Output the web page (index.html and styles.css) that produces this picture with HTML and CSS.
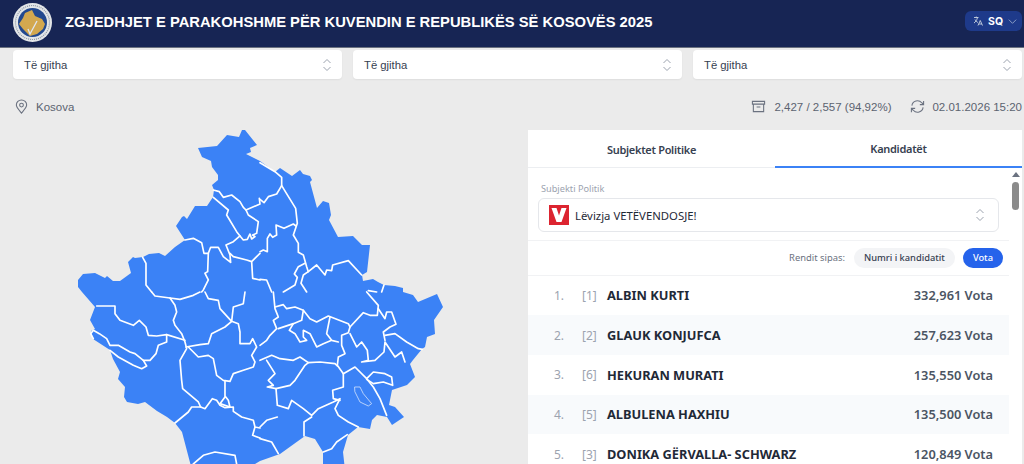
FILE: index.html
```html
<!DOCTYPE html>
<html>
<head>
    <title>Zgjedhjet e Parakohshme</title>
    <meta http-equiv="Content-Type" content="text/html; charset=utf-8" />
    <link rel="stylesheet" href="styles.css">
</head>
<body>
<div class="page">
    <div class="header">
        <svg class="logo" viewBox="0 0 39 39">
            <circle cx="19.500" cy="19.500" r="19.500" fill="#e3e6e8"/>
            <circle cx="19.500" cy="19.500" r="17" fill="none" stroke="#8d96a3" stroke-width="1.200" stroke-dasharray="1 1"/>
            <circle cx="19.500" cy="19.500" r="14.500" fill="#23498f"/>
            <path d="M12 10L19 7 22 13 29 16 32 21 30 26 24 31 17 33 10 26 6 21 10 15z" fill="#d3a84f"/>
            <path d="M15 26L17 31 24 18" fill="none" stroke="#dfe6f2" stroke-width="1.300"/>
        </svg>
        <div class="title">ZGJEDHJET E PARAKOHSHME PËR KUVENDIN E REPUBLIKËS SË KOSOVËS 2025</div>
        <div class="lang">
            <svg class="lang-icon" viewBox="0 0 24 24"><path d="M4 5h9M8.500 3v2M11 5c-1 5-4 9-7 11M6 9c1 3 4 5 6 6M12 21l4.500-10 4.500 10M13.500 18h6"/></svg>
            <span>SQ</span>
            <svg class="lang-caret" viewBox="0 0 12 12"><path d="M2 4l4 4 4-4"/></svg>
        </div>
    </div>

    <div class="filters">
        <div class="select"><span>Të gjitha</span><svg class="updown" viewBox="0 0 12 16"><path d="M2.500 6L6 2.500 9.500 6M2.500 10L6 13.500 9.500 10"/></svg></div>
        <div class="select"><span>Të gjitha</span><svg class="updown" viewBox="0 0 12 16"><path d="M2.500 6L6 2.500 9.500 6M2.500 10L6 13.500 9.500 10"/></svg></div>
        <div class="select"><span>Të gjitha</span><svg class="updown" viewBox="0 0 12 16"><path d="M2.500 6L6 2.500 9.500 6M2.500 10L6 13.500 9.500 10"/></svg></div>
    </div>

    <div class="status">
        <div class="place">
            <svg class="status-icon" viewBox="0 0 16 16"><path d="M8 15C5 11.500 2.500 9 2.500 6.500a5.500 5.500 0 0 1 11 0C13.500 9 11 11.500 8 15z"/><circle cx="8" cy="6.500" r="2"/></svg>
            <span>Kosova</span>
        </div>
        <div class="counts">
            <svg class="status-icon" viewBox="0 0 16 16"><path d="M1.500 2.500h13v3h-13zM2.500 5.500v8h11v-8M6 8.500h4"/></svg>
            <span>2,427 / 2,557 (94,92%)</span>
        </div>
        <div class="updated">
            <svg class="status-icon" viewBox="0 0 16 16"><path d="M2 7a6 6 0 0 1 10.500-3L14.500 6M14.500 2v4h-4M14 9a6 6 0 0 1-10.500 3L1.500 10M1.500 14v-4h4"/></svg>
            <span>02.01.2026 15:20</span>
        </div>
    </div>

    <div class="content">
        <div class="map-col">
            <svg class="map" viewBox="0 130 528 334">
                <path class="land" d="M198 148L217 146 227 135 239 137 242 130 245 130 257 145 250 148 251 152 246 154 260 161 275 172 280 168 292 176 300 170 303 174 310 176 312 180 310 182 317 208 323 201 329 203 331 215 329 220 338 237 353 236 362 245 370 245 367 272 362 275 363 281 373 279 378 282 384 285 395 286 403 288 403 292 413 295 418 302 437 294 443 307 434 320 435 334 427 337 425 347 422 349 413 360 410 364 415 377 407 385 392 390 389 405 395 407 404 417 392 425 387 417 377 415 372 420 370 429 358 427 348 435 343 452 345 470 323 470 323 452 315 439 305 436 280 454 277 455 260 461 245 470 192 470 182 432 175 423 167 417 157 411 145 402 138 404 127 402 124 397 125 387 118 379 120 372 113 359 110 350 93 339 91 331 95 329 90 320 95 307 82 292 78 287 78 280 83 274 95 273 105 278 107 276 113 281 120 281 131 273 128 262 133 257 135 258 143 257 149 254 159 253 165 256 175 247 185 240 176 226 182 217 184 216 187 219 195 206 207 206 213 197 214 190 212 185 218 180 218 175 212 167 211 161 202 157z"/>
                <g class="borders" transform="translate(60 120) scale(.3333)">
                    <path d="M460 210L478 215 490 232 515 225 540 245 550 262 558 270 600 252M598 235L600 252"/>
                    <path d="M460 232L505 270 500 285 530 335 540 348 520 365 498 375 510 405 512 427 490 410 475 382 452 382 445 400 432 400 425 368 400 355 375 360"/>
                    <path d="M445 400L443 455 435 460 445 480 430 510 425 516"/>
                    <path d="M248 412L258 430 258 495 275 516"/>
                    <path d="M558 270L565 285 595 305 590 340 578 345 585 350 575 357 570 342 562 358 550 360 540 348"/>
                    <path d="M510 400L520 410 560 420 575 425 600 400M575 425L578 475 600 480"/>
                </g>
                <g class="borders" transform="translate(260 120) scale(.3333)">
                    <path d="M0 128L45 155 65 172 65 197 50 222 25 230 12 248 0 238"/>
                    <path d="M65 197L107 265 112 310 100 345 115 370 115 397 130 405 140 440 145 455 130 465 123 490 140 516"/>
                    <path d="M48 315L72 325 100 312 108 318M48 315L50 345 38 352 30 342 22 355 22 395 10 390 0 395"/>
                    <path d="M135 430L115 440 103 462 112 472 105 495 70 516"/>
                    <path d="M145 455L170 435 195 465 200 450 215 452 218 435 265 422 305 465"/>
                    <path d="M0 478L20 480 35 516M325 512L350 516M372 495L365 516"/>
                </g>
                <g class="borders" transform="translate(60 292) scale(.3333)">
                    <path d="M110 42L165 42 165 65 180 85 220 100 238 85 258 105 265 130 290 132 320 128 375 145"/>
                    <path d="M275 0L285 12 330 18 360 22 400 10 420 0"/>
                    <path d="M330 18L345 40 350 60 340 85 345 100 365 125 375 150 380 170 360 205 365 265 368 290 415 330 422 345 395 345 385 360 345 393"/>
                    <path d="M320 128L320 150 295 160 288 185 270 205 250 205 225 185 210 180 175 160 150 160 140 140 118 125 100 115 92 125 100 140"/>
                    <path d="M150 175L175 195 220 220 245 230 260 222 250 205"/>
                    <path d="M378 165L420 158 445 155 455 125 495 105 515 88 535 95 540 120 540 155 570 155 578 140 590 165 575 190 585 210 580 225 550 235 520 245 510 268 490 265 470 250 460 200 445 190 415 195 385 165"/>
                    <path d="M515 88L520 45 550 35 555 0M435 0L445 20 475 25 480 50 515 88"/>
                    <path d="M495 268L495 315 480 335 510 345 505 325 495 312"/>
                    <path d="M422 345L435 350 457 320 470 325 480 340 495 347 520 345 520 358 545 375 580 385 585 405 600 408M585 405L578 430 600 438"/>
                    <path d="M400 516L430 490 465 480 525 490 530 516"/>
                </g>
                <g class="borders" transform="translate(260 292) scale(.3333)">
                    <path d="M40 0L45 50 55 75 40 85 50 110 30 130 20 145 0 160"/>
                    <path d="M45 45L70 38 80 50 105 45 130 55 125 85 100 95 55 110"/>
                    <path d="M130 55L150 80 170 90 205 72 265 95 270 105"/>
                    <path d="M210 75L200 125 215 145 235 150 215 145 190 155 170 165 150 125 130 115 130 135 140 145 120 150 105 125 88 115 100 95"/>
                    <path d="M320 0L355 40 352 70 330 70 310 62 270 105 265 122 245 130 245 160 255 185 235 195 232 220 250 245 285 225 320 260 340 285 360 320 380 370"/>
                    <path d="M270 125L290 165 305 150 322 175 325 205 305 210 345 205 372 180 375 150 405 195 425 180 435 210"/>
                    <path d="M355 50L375 80 380 60 395 60 408 97 390 105 370 120 375 145"/>
                    <path d="M375 130L405 125 440 150 475 170 487 172"/>
                    <path d="M0 205L35 190 60 200 100 205 120 195 145 212 180 210 225 215 232 222"/>
                    <path d="M20 205L45 245 25 265 40 280 22 285 48 290 90 280 105 265 135 220 145 212"/>
                    <path d="M48 290L52 340 85 350 95 325 130 350 155 370 175 350 220 330 240 320 225 350 235 370 265 390 295 405"/>
                    <path d="M250 245L250 285 218 295 220 320 240 325"/>
                    <path d="M155 375L132 390 132 432M52 375L20 385 0 405M0 440L35 450 55 485"/>
                    <path d="M190 480L215 470 230 450 262 428"/>
                    <path d="M320 260L340 240 375 245 395 255 398 280 370 270 340 275 320 262"/>
                    <path class="lake" d="M285 285L300 285 310 305 335 335 325 342 300 330 285 300z"/>
                </g>
            </svg>
        </div>

        <div class="panel">
            <div class="tabs">
                <div class="tab">Subjektet Politike</div>
                <div class="tab tab-active">Kandidatët</div>
            </div>
            <div class="panel-body">
                <div class="panel-main">
                    <div class="party-block">
                        <div class="party-label">Subjekti Politik</div>
                        <div class="party-select">
                            <svg class="party-logo" viewBox="0 0 20 20">
                                <rect width="20" height="20" fill="#dc2430"/>
                                <path d="M2.500 3h5L10 10.500 12.500 3h5L12.500 17h-5z" fill="#fff"/>
                            </svg>
                            <span class="party-name">Lëvizja VETËVENDOSJE!</span>
                            <svg class="updown" viewBox="0 0 12 16"><path d="M2.500 6L6 2.500 9.500 6M2.500 10L6 13.500 9.500 10"/></svg>
                        </div>
                    </div>
                    <div class="sort-row">
                        <span class="sort-label">Rendit sipas:</span>
                        <span class="pill">Numri i kandidatit</span>
                        <span class="pill pill-active">Vota</span>
                    </div>
                    <div class="row"><span class="num">1.</span><span class="code">[1]</span><span class="name">ALBIN KURTI</span><span class="votes">332,961 Vota</span></div>
                    <div class="row row-alt"><span class="num">2.</span><span class="code">[2]</span><span class="name">GLAUK KONJUFCA</span><span class="votes">257,623 Vota</span></div>
                    <div class="row"><span class="num">3.</span><span class="code">[6]</span><span class="name">HEKURAN MURATI</span><span class="votes">135,550 Vota</span></div>
                    <div class="row row-alt"><span class="num">4.</span><span class="code">[5]</span><span class="name">ALBULENA HAXHIU</span><span class="votes">135,500 Vota</span></div>
                    <div class="row"><span class="num">5.</span><span class="code">[3]</span><span class="name">DONIKA GËRVALLA- SCHWARZ</span><span class="votes">120,849 Vota</span></div>
                </div>
                <div class="scrollbar">
                    <div class="scroll-arrow"></div>
                    <div class="scroll-thumb"></div>
                </div>
            </div>
        </div>
    </div>
</div>
</body>
</html>
```

FILE: styles.css
```css
html, body {margin: 0; height: 100%; overflow: hidden;}
body{
    background: #ebebeb;
    font-family: "Liberation Sans", Arial, sans-serif;
    color: #4b5563;
}
.page{
    height: 464px;
    overflow: hidden;
}

/* Шапка */
.header{
    display: flex;
    align-items: center;
    height: 48px;
    background: #172554;
    border-bottom: 1px solid #6b7280;
    box-sizing: border-box;
    padding: 0 2px 0 13px;
}
.logo{
    width: 39px;
    height: 39px;
    margin-right: 13px;
    margin-top: -2px;
}
.title{
    flex: 1;
    font-size: 14.750px;
    font-weight: bold;
    color: white;
    margin-top: -3px;
}
.lang{
    display: flex;
    align-items: center;
    width: 57px;
    height: 20px;
    box-sizing: border-box;
    padding-left: 7px;
    background: #1e3a8a;
    border-radius: 6px;
    color: white;
    font-size: 10.500px;
    font-weight: bold;
    font-family: "Inter", sans-serif;
    margin-top: -5px;
}
.lang-icon{
    width: 12px;
    height: 12px;
    margin-right: 4px;
    fill: none;
    stroke: #cbd5e1;
    stroke-width: 1.800;
}
.lang-caret{
    width: 11px;
    height: 11px;
    margin-left: 4px;
    fill: none;
    stroke: #93a4c8;
    stroke-width: 1;
}

/* Фильтры */
.filters{
    display: flex;
    gap: 11px;
    padding: 2px 2px 0 13px;
}
.select{
    display: flex;
    align-items: center;
    justify-content: space-between;
    flex: 1;
    height: 29px;
    box-sizing: border-box;
    padding: 0 9px 0 11px;
    background: white;
    border-radius: 4px;
    font-size: 11.300px;
    color: #374151;
    box-shadow: 0 1px 2px rgba(0, 0, 0, 0.06);
}
.updown{
    width: 12px;
    height: 16px;
    fill: none;
    stroke: #9ca3af;
    stroke-width: 1;
}

/* Строка статуса */
.status{
    display: flex;
    align-items: center;
    height: 17px;
    margin-top: 19px;
    padding: 0 2px 0 14px;
    font-size: 11.500px;
    color: #5b6370;
}
.status-icon{
    width: 15px;
    height: 15px;
    fill: none;
    stroke: #6b7280;
    stroke-width: 1.150;
}
.place, .counts, .updated{
    display: flex;
    align-items: center;
    gap: 7px;
}
.counts{
    gap: 8px;
}
.place{
    flex: 1;
}
.counts{
    margin-right: 19px;
}

/* Карта и панель */
.content{
    display: flex;
    margin-top: 15px;
}
.map-col{
    width: 528px;
    flex-shrink: 0;
}
.map{
    display: block;
    width: 528px;
    height: 334px;
}
.land{
    fill: #3b82f6;
}
.borders path{
    fill: none;
    stroke: white;
    stroke-width: 5;
    stroke-linejoin: round;
    stroke-linecap: round;
}
.borders .lake{
    stroke: #cfe0fb;
    stroke-width: 2.500;
}
.panel{
    width: 494px;
    background: white;
    font-family: "Noto Sans", sans-serif;
}
.tabs{
    display: flex;
    height: 38px;
    box-sizing: border-box;
    border-bottom: 1px solid #eceef1;
}
.tab{
    width: 247px;
    box-sizing: border-box;
    text-align: center;
    font-size: 11px;
    font-weight: 600;
    letter-spacing: -0.300px;
    line-height: 40px;
    color: #374151;
}
.tab-active{
    height: 38px;
    line-height: 38px;
    border-bottom: 2px solid #3b82f6;
}
.panel-body{
    display: flex;
}
.panel-main{
    width: 481px;
}
.party-block{
    height: 73px;
    box-sizing: border-box;
    padding: 14px 10px 0;
    border-bottom: 1px solid #f1f2f4;
}
.party-label{
    font-size: 9.200px;
    line-height: 14px;
    padding-left: 3px;
    color: #9ca3af;
}
.party-select{
    display: flex;
    align-items: center;
    height: 34px;
    box-sizing: border-box;
    margin-top: 2px;
    padding: 0 9px 0 10px;
    border: 1px solid #e5e7eb;
    border-radius: 6px;
}
.party-select .updown{
    margin-right: 3px;
}
.party-logo{
    width: 20px;
    height: 20px;
    margin-right: 6px;
}
.party-name{
    flex: 1;
    font-size: 11.350px;
    color: #1f2937;
}
.sort-row{
    display: flex;
    align-items: center;
    justify-content: flex-end;
    height: 34.500px;
    box-sizing: border-box;
    padding-right: 6px;
    border-bottom: 1px solid #f1f2f4;
}
.sort-label{
    font-size: 9.400px;
    color: #6b7280;
    margin-right: 9px;
}
.pill{
    height: 20px;
    line-height: 20px;
    padding: 0 10px;
    border-radius: 10px;
    font-size: 9.300px;
    font-weight: 500;
    background: #f3f4f6;
    color: #374151;
}
.pill-active{
    margin-left: 8px;
    padding: 0 10px;
    background: #2563eb;
    color: white;
}
.row{
    display: flex;
    align-items: center;
    height: 39.700px;
    font-size: 13px;
}
.row-alt{
    background: #f8fafc;
}
.num{
    width: 54px;
    text-align: left;
    padding-left: 26px;
    box-sizing: border-box;
    color: #9ca3af;
    font-size: 12px;
}
.code{
    width: 25px;
    color: #9ca3af;
    font-size: 12px;
}
.name{
    flex: 1;
    font-weight: 700;
    font-size: 12.800px;
    color: #1f2937;
}
.votes{
    padding-right: 16px;
    font-weight: 600;
    font-size: 12.800px;
    color: #4b5563;
}
.scrollbar{
    width: 13px;
    display: flex;
    flex-direction: column;
    align-items: center;
}
.scroll-arrow{
    width: 0;
    height: 0;
    margin-top: 4px;
    border-left: 4px solid transparent;
    border-right: 4px solid transparent;
    border-bottom: 5px solid #6b7280;
}
.scroll-thumb{
    width: 7px;
    height: 28px;
    margin-top: 5px;
    border-radius: 4px;
    background: #8b8b8b;
}
```
